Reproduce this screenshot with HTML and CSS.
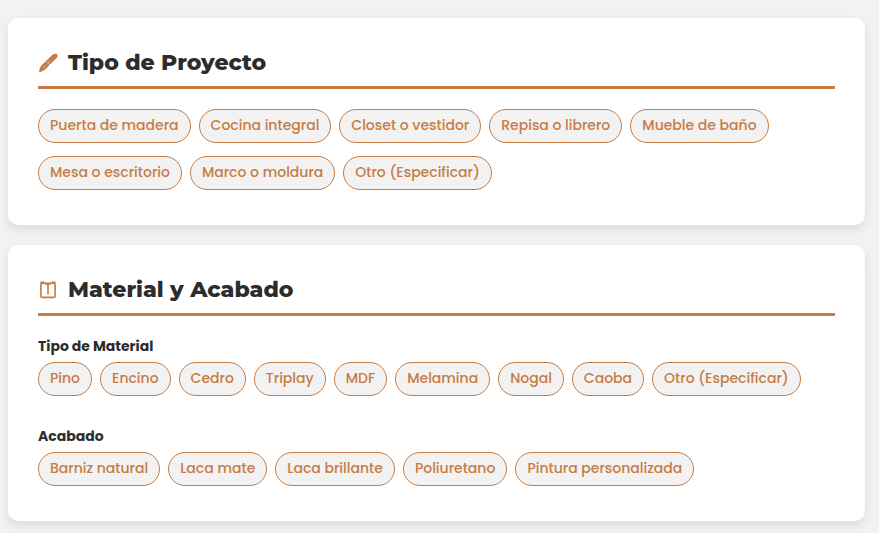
FILE: index.html
```html
<!DOCTYPE html>
<html lang="es">
<head>
<meta charset="utf-8">
<meta name="viewport" content="width=device-width, initial-scale=1">
<title>Cotización</title>
<link rel="stylesheet" href="styles.css">
</head>
<body>
<main class="page">
  <section class="card">
    <h2 class="title">
      <svg class="icon" viewBox="0 0 20 20" aria-hidden="true">
        <path fill="currentColor" d="M1 18.4 2 14.6Q3.6 12 7 9L14.4 1.8Q17 0 19 1Q20.4 3 18.2 5.6L11 12.6Q8.4 16 5.8 17.6L2 19.2Z"/>
        <path fill="none" stroke="#fff" stroke-width="0.6" d="M8.8 8.6 11.8 11.8M5.6 14.4 7.2 12.8M10.8 9.4l1.6-1.6"/>
      </svg>
      Tipo de Proyecto
    </h2>
    <div class="chips">
      <button type="button" class="chip">Puerta de madera</button>
      <button type="button" class="chip">Cocina integral</button>
      <button type="button" class="chip">Closet o vestidor</button>
      <button type="button" class="chip">Repisa o librero</button>
      <button type="button" class="chip">Mueble de baño</button>
      <button type="button" class="chip">Mesa o escritorio</button>
      <button type="button" class="chip">Marco o moldura</button>
      <button type="button" class="chip">Otro (Especificar)</button>
    </div>
  </section>
  <section class="card">
    <h2 class="title">
      <svg class="icon" viewBox="0 0 20 20" aria-hidden="true">
        <g fill="none" stroke="currentColor" stroke-width="1.6">
          <rect x="2.9" y="3.2" width="14.2" height="14.2" rx="1.2"/>
          <path d="M10 3.5v11M7 4h6"/>
          <path stroke-width="2" d="M2.4 2.6h4M13.6 2.6h4"/>
        </g>
      </svg>
      Material y Acabado
    </h2>
    <div class="group" role="group" aria-labelledby="material">
      <h3 class="label" id="material">Tipo de Material</h3>
      <div class="chips">
        <button type="button" class="chip">Pino</button>
        <button type="button" class="chip">Encino</button>
        <button type="button" class="chip">Cedro</button>
        <button type="button" class="chip">Triplay</button>
        <button type="button" class="chip">MDF</button>
        <button type="button" class="chip">Melamina</button>
        <button type="button" class="chip">Nogal</button>
        <button type="button" class="chip">Caoba</button>
        <button type="button" class="chip">Otro (Especificar)</button>
      </div>
    </div>
    <div class="group" role="group" aria-labelledby="acabado">
      <h3 class="label" id="acabado">Acabado</h3>
      <div class="chips">
        <button type="button" class="chip">Barniz natural</button>
        <button type="button" class="chip">Laca mate</button>
        <button type="button" class="chip">Laca brillante</button>
        <button type="button" class="chip">Poliuretano</button>
        <button type="button" class="chip">Pintura personalizada</button>
      </div>
    </div>
  </section>
</main>
</body>
</html>
```
FILE: styles.css
```css
* { box-sizing: border-box; }
body {
  margin: 0;
  background: #f2f2f2;
  color: #2c2c2c;
  font-family: Poppins, Inter, sans-serif;
}
.page {
  display: flex;
  flex-direction: column;
  gap: 20px;
  padding: 18px 14px 12px 8px;
}
.card {
  padding: 30px 30px 35px;
  border-radius: 10px;
  background: #fff;
  box-shadow: 0 4px 10px rgba(0, 0, 0, 0.1);
}
.title {
  display: flex;
  align-items: center;
  gap: 10px;
  margin: 0 0 20px;
  padding-bottom: 8px;
  border-bottom: 3px solid #c67c43;
  font-family: Montserrat, Inter, sans-serif;
  font-size: 22px;
  font-weight: 800;
  line-height: 30px;
}
.icon {
  width: 20px;
  height: 20px;
  color: #c67c43;
}
.chips {
  display: flex;
  flex-wrap: wrap;
  gap: 13px 8px;
}
.chip {
  padding: 5px 11px 7px;
  border: 1px solid #c67c43;
  border-radius: 20px;
  background: #f2f2f2;
  color: #c67c43;
  font-family: inherit;
  font-size: 14px;
  font-weight: 500;
  line-height: 20px;
}
.group + .group { margin-top: 30px; }
.label {
  margin: 0 0 6px;
  font-size: 14px;
  font-weight: 700;
  line-height: 20px;
}
```
